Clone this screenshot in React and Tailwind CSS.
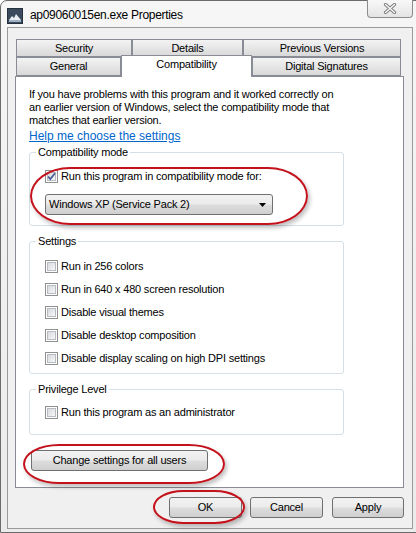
import React from 'react';

function Check({ checked }) {
  return (
    <span className="flex h-[13px] w-[13px] shrink-0 items-center justify-center border border-[#8e8f8f] bg-white p-[1px]">
      <span className="relative flex h-full w-full items-center justify-center border border-[#b8bcc2] bg-gradient-to-br from-[#d6d9de] to-[#f8f8f8]">
        {checked && (
          <svg width="11" height="11" viewBox="0 0 11 11" className="absolute">
            <path d="M2 5.5 L4.3 8 L9 2.2" fill="none" stroke="#4a5f97" strokeWidth="1.8" />
          </svg>
        )}
      </span>
    </span>
  );
}

function Option({ label, checked }) {
  return (
    <div className="flex h-[13px] items-center gap-[3px]">
      <Check checked={checked} />
      <span className="whitespace-nowrap">{label}</span>
    </div>
  );
}

function Tab({ label, w }) {
  return (
    <div
      className={`flex h-full items-center justify-center border border-[#898c95] bg-gradient-to-b from-[#f3f3f3] to-[#d9d9d9] ${w}`}
    >
      {label}
    </div>
  );
}

function Button({ children, w }) {
  return (
    <div
      className={`flex h-[21px] items-center justify-center rounded-[3px] border border-[#707070] bg-[linear-gradient(#f2f2f2_0%,#ebebeb_48%,#dddddd_52%,#cfcfcf_100%)] ${w}`}
    >
      {children}
    </div>
  );
}

const settings = [
  'Run in 256 colors',
  'Run in 640 x 480 screen resolution',
  'Disable visual themes',
  'Disable desktop composition',
  'Disable display scaling on high DPI settings',
];

export default function App() {
  return (
    <div className="relative h-[533px] w-[416px] overflow-hidden bg-white font-['Segoe_UI','Liberation_Sans',sans-serif] text-[11px] leading-[13px] tracking-[-0.2px] text-black">
      <div className="flex h-[533px] w-[424px] flex-col rounded-t-[7px] border border-[#6b6b6b] bg-gradient-to-b from-[#f6f6f6] to-[#ebebeb] pl-[6px]">
        {/* title bar */}
        <div className="flex h-[26px] w-[406px] items-start">
          <svg width="16" height="16" viewBox="0 0 16 16" className="mt-[7px] shrink-0">
            <rect x="0.5" y="0.5" width="15" height="15" fill="#3b4a5c" stroke="#25313d" />
            <path d="M2 12 L5 8 L7 10 L9 6 L14 12 Z" fill="#e9eef3" />
            <rect x="2" y="12" width="12" height="2" fill="#9fb1c4" />
          </svg>
          <span className="ml-[7px] mt-[8px] whitespace-nowrap text-[12px] tracking-[-0.3px]">ap09060015en.exe Properties</span>
          <div className="-mt-[1px] ml-auto flex h-[18px] w-[46px] items-center justify-center rounded-b-[4px] border border-t-0 border-[#8c8c8c] bg-gradient-to-b from-[#f8f8f8] to-[#e4e4e4]">
            <svg width="14" height="11" viewBox="0 0 14 11">
              <path d="M2.5 1.5 L11.5 9.5 M11.5 1.5 L2.5 9.5" stroke="#7d7d7d" strokeWidth="3.2" strokeLinecap="round" />
              <path d="M2.5 1.5 L11.5 9.5 M11.5 1.5 L2.5 9.5" stroke="#ffffff" strokeWidth="1.2" strokeLinecap="round" />
            </svg>
          </div>
        </div>

        {/* client */}
        <div className="flex h-[502px] w-[406px] flex-col border border-[#9a9a9a] bg-[#f0f0f0] px-[7px] pt-[11px]">
          <div className="ml-[1px] flex h-[18px]">
            <Tab label="Security" w="w-[116px]" />
            <Tab label="Details" w="w-[111px]" />
            <Tab label="Previous Versions" w="w-[158px]" />
          </div>
          <div className="ml-[1px] flex h-[19px] items-start">
            <Tab label="General" w="w-[105px]" />
            <div className="relative z-10 -mt-[2px] flex h-[22px] w-[131px] justify-center border border-b-0 border-[#898c95] bg-white pt-[2px]">
              Compatibility
            </div>
            <Tab label="Digital Signatures" w="w-[149px]" />
          </div>

          {/* tab panel */}
          <div className="flex h-[412px] w-[389px] flex-col border border-[#898c95] bg-white pl-[13px] pt-[11px]">
            <p className="whitespace-nowrap">
              If you have problems with this program and it worked correctly on
              <br />
              an earlier version of Windows, select the compatibility mode that
              <br />
              matches that earlier version.
            </p>
            <a className="mt-[3px] self-start text-[12px] tracking-normal text-[#0066cc] underline">Help me choose the settings</a>

            <fieldset className="mt-[3px] w-[315px] rounded-[3px] border border-[#d5dfe5] pb-[10px] pl-[15px]">
              <legend className="-ml-[9px] px-[2px]">Compatibility mode</legend>
              <div className="mt-[11px]">
                <Option label="Run this program in compatibility mode for:" checked />
              </div>
              <div className="mt-[11px] flex h-[21px] w-[228px] items-center justify-between rounded-[3px] border border-[#707070] bg-[linear-gradient(#f2f2f2_0%,#ebebeb_48%,#dddddd_52%,#cfcfcf_100%)] pl-[3px] pr-[6px]">
                <span>Windows XP (Service Pack 2)</span>
                <svg width="7" height="4" viewBox="0 0 7 4">
                  <path d="M0 0 H7 L3.5 4 Z" fill="#000" />
                </svg>
              </div>
            </fieldset>

            <fieldset className="mt-[9px] w-[315px] rounded-[3px] border border-[#d5dfe5] pb-[8px] pl-[15px]">
              <legend className="-ml-[9px] px-[2px]">Settings</legend>
              <div className="mt-[12px] flex flex-col gap-[10px]">
                {settings.map((s) => (
                  <Option key={s} label={s} />
                ))}
              </div>
            </fieldset>

            <fieldset className="mt-[9px] w-[315px] rounded-[3px] border border-[#d5dfe5] pb-[15px] pl-[15px]">
              <legend className="-ml-[9px] px-[2px]">Privilege Level</legend>
              <div className="mt-[10px]">
                <Option label="Run this program as an administrator" />
              </div>
            </fieldset>

            <div className="ml-[2px] mt-[15px]">
              <Button w="w-[177px]">Change settings for all users</Button>
            </div>
          </div>

          {/* dialog buttons */}
          <div className="mt-[9px] flex w-[389px] justify-end">
            <Button w="w-[73px]">OK</Button>
            <div className="ml-[8px]">
              <Button w="w-[73px]">Cancel</Button>
            </div>
            <div className="ml-[9px]">
              <Button w="w-[72px]">Apply</Button>
            </div>
          </div>
        </div>
      </div>

      {/* red annotation rings */}
      <div className="absolute left-[30px] top-[167px] h-[58px] w-[278px] rounded-[40px/29px] border-2 border-[#c4121c] shadow-[2px_3px_4px_rgba(0,0,0,0.25)]" />
      <div className="absolute left-[23px] top-[444px] h-[40px] w-[202px] rounded-[36px/20px] border-2 border-[#c4121c] shadow-[2px_3px_4px_rgba(0,0,0,0.25)]" />
      <div className="absolute left-[153px] top-[490px] h-[34px] w-[92px] rounded-[30px/17px] border-2 border-[#c4121c] shadow-[2px_3px_4px_rgba(0,0,0,0.25)]" />
    </div>
  );
}
